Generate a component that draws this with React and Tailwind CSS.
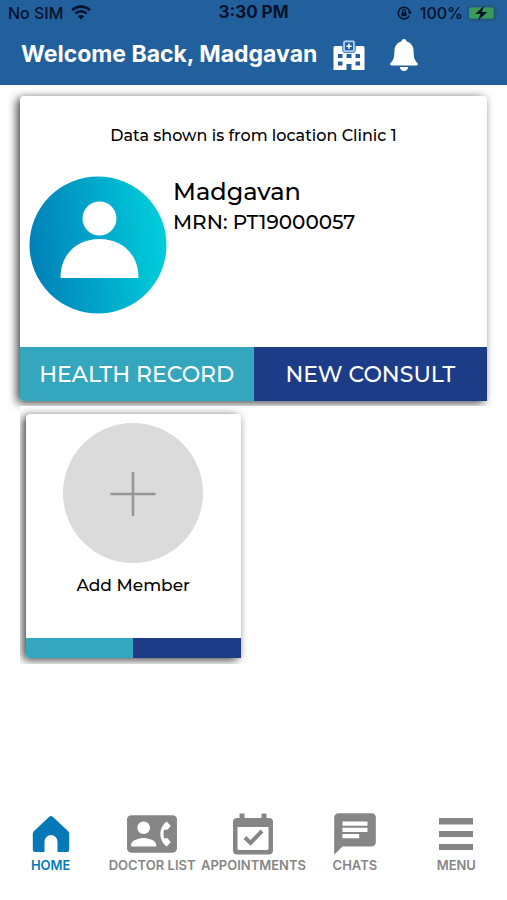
import React from 'react';
import { MdChat, MdContactPhone } from 'react-icons/md';

const WifiIcon = () => (
  <svg width="20" height="15" viewBox="0 0 20 15" fill="none" stroke="currentColor" strokeWidth="2.6" aria-hidden="true">
    <path d="M1.2 5.2a12.6 12.6 0 0 1 17.6 0" />
    <path d="M4.4 8.6a8 8 0 0 1 11.2 0" />
    <path d="M10 14.5l-3.2-3.3a4.6 4.6 0 0 1 6.4 0z" fill="currentColor" stroke="none" />
  </svg>
);

const LockIcon = () => (
  <svg width="15" height="14" viewBox="0 0 15 14" fill="none" stroke="currentColor" strokeWidth="1.6" aria-hidden="true">
    <path d="M12.2 9.8A5.8 5.8 0 1 1 12.7 5.6" />
    <path d="M10.6 5.4h4.4l-2.2 3z" fill="currentColor" stroke="none" />
    <rect x="4.4" y="6.2" width="5.2" height="4" rx="0.6" fill="currentColor" stroke="none" />
    <path d="M5.6 6.4V5a1.4 1.4 0 0 1 2.8 0v1.4" strokeWidth="1.1" />
  </svg>
);

const BatteryIcon = () => (
  <svg width="32" height="16" viewBox="0 0 32 16" aria-hidden="true">
    <rect x="0.6" y="0.9" width="27.4" height="14.2" rx="3.6" fill="none" stroke="#2c5470" strokeWidth="1.2" />
    <rect x="2" y="2.4" width="24.6" height="11.2" rx="2.2" fill="#389b57" />
    <path d="M29.4 5.6c1.8.7 1.8 4.1 0 4.8z" fill="#2c5470" />
    <path d="M17.2 0.8L8.2 8.9h5.4l-2.4 6.3 9.2-8.3h-5.6z" fill="#04122b" />
  </svg>
);

const HospitalIcon = () => (
  <svg width="32" height="32" viewBox="0 0 32 32" aria-hidden="true">
    <path
      fill="#fff"
      fillRule="evenodd"
      d="M2 7h28q1.500 0 1.500 1.500V31H18.500v-6h-5v6H.5V8.500Q.5 7 2 7zM5 15v4h4.500v-4zM13.500 15v4h5v-4zM22.500 15v4H27v-4zM5 22.500v4h4.500v-4zM22.500 22.500v4H27v-4z"
    />
    <rect x="9.700" y="1" width="12.600" height="12.600" rx="2.500" fill="#a9cdf5" stroke="#21609e" strokeWidth="0.8" />
    <rect x="12" y="3.200" width="8" height="8" rx="0.600" fill="#21609e" />
    <path d="M16 4.600v5.200M13.400 7.200h5.200" stroke="#fff" strokeWidth="1.500" />
  </svg>
);

const BellIcon = () => (
  <svg width="30" height="34" viewBox="0 0 30 34" fill="#fff" aria-hidden="true">
    <path d="M15 1c1.500 0 2.500 1 2.600 2.400 4.500 1.200 7 5 7 9.600 0 6.500 1 9.200 3.800 12 1 1 .4 2.400-1 2.400H2.600c-1.400 0-2-1.400-1-2.400 2.800-2.800 3.800-5.500 3.800-12 0-4.600 2.500-8.400 7-9.600C12.500 2 13.500 1 15 1z" />
    <path d="M10.800 29h8.400c-.3 2.400-2 4-4.200 4s-3.900-1.600-4.200-4z" />
  </svg>
);

const AvatarIcon = () => (
  <svg className="shrink-0" width="138" height="138" viewBox="0 0 138 138" aria-hidden="true">
    <defs>
      <linearGradient id="avatar" x1="0" y1="0.55" x2="1" y2="0.45">
        <stop offset="0" stopColor="#0080b8" />
        <stop offset="1" stopColor="#00cfdc" />
      </linearGradient>
    </defs>
    <circle cx="69" cy="69" r="68.500" fill="url(#avatar)" />
    <circle cx="70.500" cy="42.500" r="17" fill="#fff" />
    <path d="M31.500 102C31.500 78 48 63 70.500 63s39 15 39 39z" fill="#fff" />
  </svg>
);

const AddIcon = () => (
  <svg width="140" height="140" viewBox="0 0 140 140" aria-hidden="true">
    <circle cx="70" cy="70" r="70" fill="#dbdbdb" />
    <path d="M47.500 71h45M70 49v44" stroke="#969696" strokeWidth="2.500" />
  </svg>
);

const HomeIcon = () => (
  <svg width="38" height="38" viewBox="0 0 38 38" aria-hidden="true">
    <path
      fill="currentColor"
      d="M17.300 1.800q1.700-1.500 3.400 0L36 16q1.200 1.200 1.200 2.600V35q0 2-2 2H25.500V26.500a6.500 6.500 0 0 0-13 0V37H2.800q-2 0-2-2V18.600Q.8 17.200 2 16z"
    />
  </svg>
);

const CalendarIcon = () => (
  <svg width="42" height="42" viewBox="0 0 42 42" aria-hidden="true">
    <path
      fill="currentColor"
      fillRule="evenodd"
      d="M7.500 0.500h5v4.500h17V.5h5V5H37q4 0 4 4v28.500q0 4-4 4H5q-4 0-4-4V9q0-4 4-4h2.500zM5.500 14v21.500q0 1.500 1.500 1.500h28q1.500 0 1.500-1.500V14z"
    />
    <path d="M13 24.500l5.500 5.500L30 18" fill="none" stroke="currentColor" strokeWidth="4" />
  </svg>
);

const MenuIcon = () => (
  <svg width="34" height="34" viewBox="0 0 34 34" fill="currentColor" aria-hidden="true">
    <path d="M0 1h34v6.500H0zM0 14h34v6H0zM0 27h34v6H0z" />
  </svg>
);

const navItems = [
  { label: 'HOME', icon: <HomeIcon />, active: true },
  { label: 'DOCTOR LIST', icon: <MdContactPhone size={50} /> },
  { label: 'APPOINTMENTS', icon: <CalendarIcon /> },
  { label: 'CHATS', icon: <MdChat size={50} /> },
  { label: 'MENU', icon: <MenuIcon /> },
];

function App() {
  return (
    <div className="flex min-h-screen flex-col bg-white font-['Montserrat','Inter',sans-serif] font-medium text-black">
      <header className="bg-[#21609c] font-['Inter',sans-serif]">
        {/* Status bar */}
        <div className="grid h-6 grid-cols-3 items-center px-2 text-base text-[#04122b]">
          <div className="flex items-center gap-2">
            <span>No SIM</span>
            <WifiIcon />
          </div>
          <span className="text-center text-[17px] font-bold">3:30 PM</span>
          <div className="flex items-center justify-end gap-1">
            <LockIcon />
            <span className="ml-1">100%</span>
            <BatteryIcon />
          </div>
        </div>

        <div className="flex h-[61px] items-center pl-[21px]">
          <h1 className="text-[23px] font-bold text-white">Welcome Back, Madgavan</h1>
          <button type="button" aria-label="Change clinic" className="ml-4">
            <HospitalIcon />
          </button>
          <button type="button" aria-label="Notifications" className="ml-6">
            <BellIcon />
          </button>
        </div>
      </header>

      <main className="px-5 pt-[11px]">
        {/* Patient card */}
        <section className="rounded-sm bg-white shadow-[-3px_2px_10px_rgba(0,0,0,0.75)]">
          <p className="pt-7 text-center text-base leading-6">Data shown is from location Clinic 1</p>
          <div className="flex gap-1.5 px-[9px] pt-7 pb-[33px]">
            <AvatarIcon />
            <div>
              <h2 className="text-2xl leading-8">Madgavan</h2>
              <p className="text-xl leading-7">MRN: PT19000057</p>
            </div>
          </div>
          <div className="grid grid-cols-2 text-[22px] text-white">
            <button type="button" className="h-[54px] rounded-bl-sm bg-[#34a6be]">HEALTH RECORD</button>
            <button type="button" className="h-[54px] bg-[#1d3c87]">NEW CONSULT</button>
          </div>
        </section>

        {/* Members */}
        <section className="mt-[5px] grid grid-cols-2 overflow-hidden bg-white pt-2 pb-[6px] pl-[6px]">
          <div className="mr-4 flex flex-col rounded-sm bg-white shadow-[-3px_2px_10px_rgba(0,0,0,0.75)]">
            <button type="button" className="flex flex-col items-center gap-2 pt-[9px] pb-[39px]">
              <AddIcon />
              <span className="text-[17px] leading-7">Add Member</span>
            </button>
            <div className="grid h-5 grid-cols-2">
              <div className="rounded-bl-sm bg-[#34a6be]" />
              <div className="bg-[#1d3c87]" />
            </div>
          </div>
        </section>
      </main>

      <nav className="mt-auto grid grid-cols-5 pb-[25px] font-['Inter',sans-serif]">
        {navItems.map((item) => (
          <a
            key={item.label}
            href="#"
            className={`flex flex-col items-center text-[13px] leading-5 font-semibold whitespace-nowrap ${item.active ? 'text-[#0579b8]' : 'text-[#868686]'}`}
          >
            <span className="flex h-[42px] items-center">{item.icon}</span>
            {item.label}
          </a>
        ))}
      </nav>
    </div>
  );
}

export default App;
